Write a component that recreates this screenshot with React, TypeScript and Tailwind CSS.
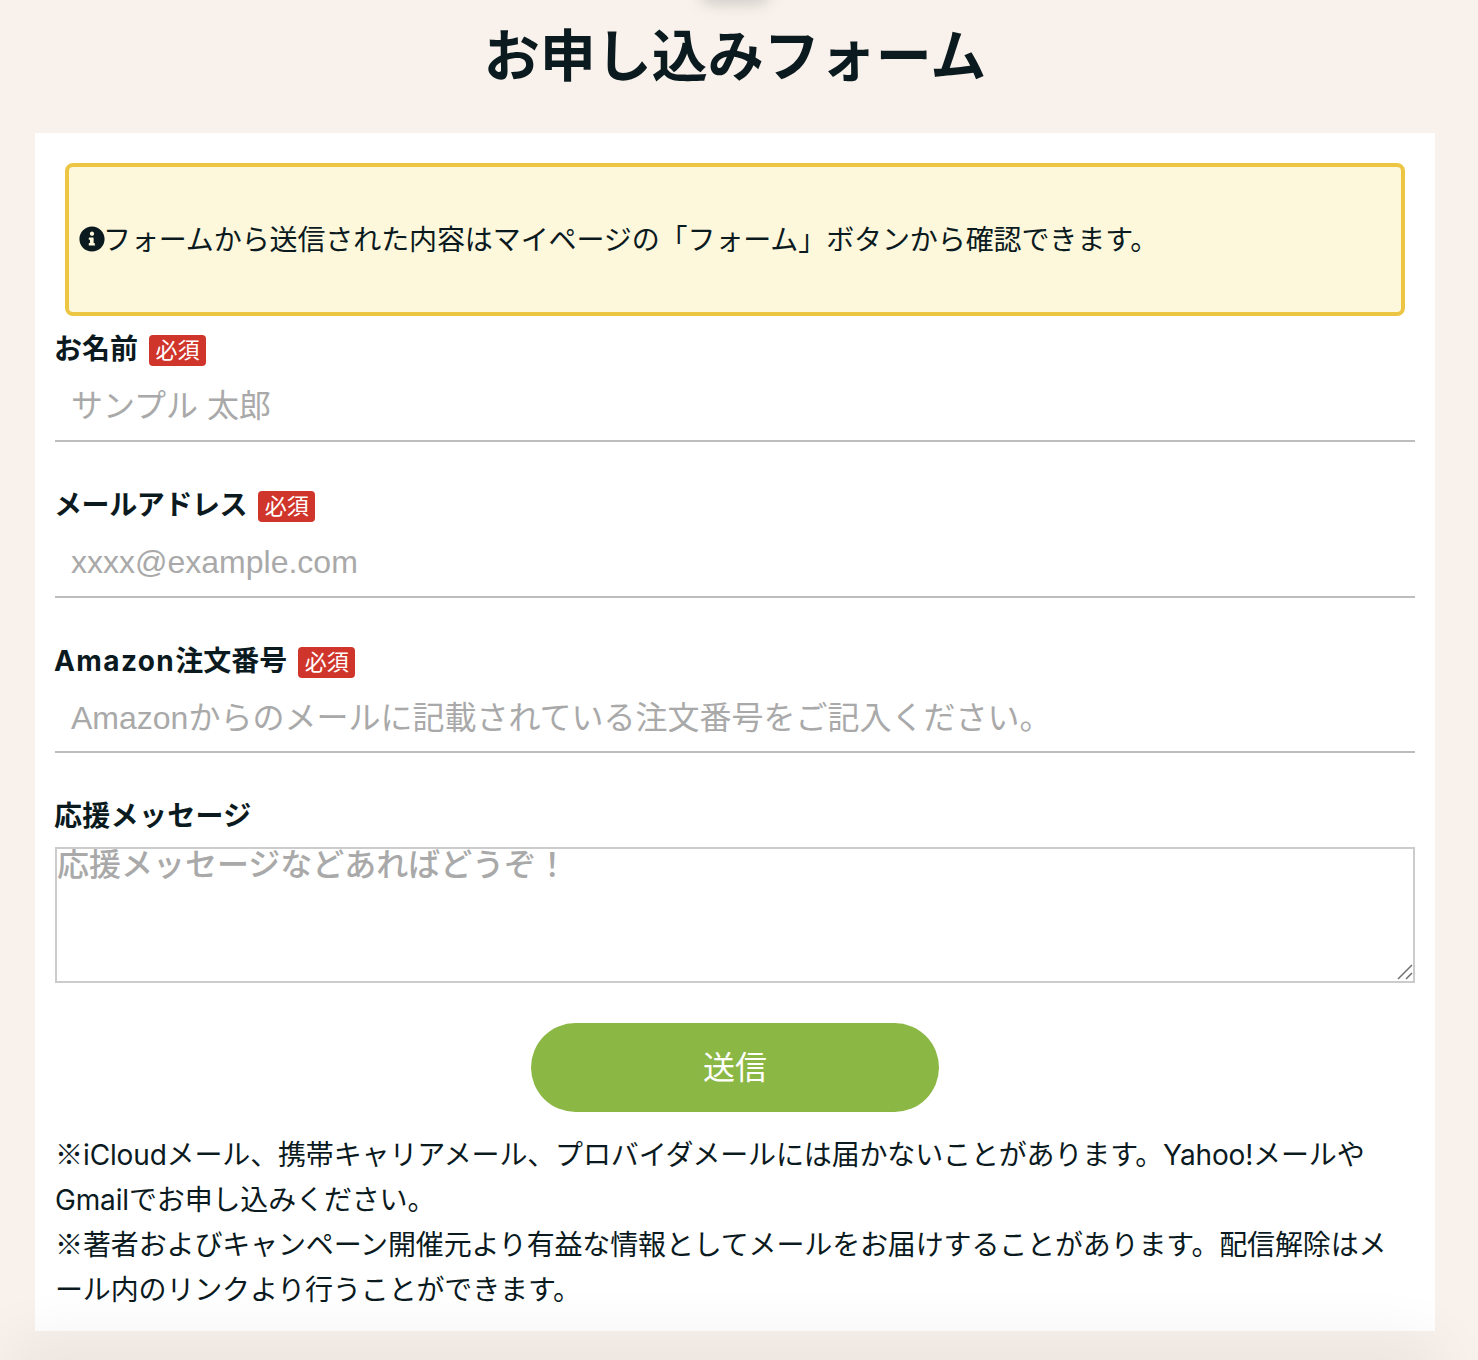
import React from "react";

const Badge = ({ ml = "ml-[11px]" }: { ml?: string }) => (
  <span className={`${ml} inline-flex h-[31px] w-[57px] items-center justify-center rounded-[4px] bg-[#d0352b] text-[22px] font-normal leading-none text-white`}>
    必須
  </span>
);

const Label = ({ children, badge = true, cls = "" }: { children: React.ReactNode; badge?: boolean; cls?: string }) => (
  <div className="flex h-[31px] items-center text-[28px] font-bold leading-none text-[#0b1a1e]">
    <span className={`-ml-[1px] pb-[2px] ${cls}`}>{children}</span>
    {badge && <Badge />}
  </div>
);

const Field = ({ label, placeholder, mt, cls, h = "h-[76px]" }: { label: React.ReactNode; placeholder: string; mt: string; cls?: string; h?: string }) => (
  <div className={mt}>
    <Label cls={cls}>{label}</Label>
    <input
      readOnly
      placeholder={placeholder}
      className={`block ${h} w-full border-b-2 border-[#bdbdbd] bg-white px-4 pt-[7px] text-[32px] outline-none placeholder:text-[#a9a9a9]`}
    />
  </div>
);

const Mark = () => <span className="font-['Noto_Sans_CJK_JP'] leading-none tracking-normal">※</span>;

export default function App() {
  return (
    <div
      className="relative h-[1360px] overflow-hidden bg-[#f9f2ec] text-[#0b1a1e]"
      style={{ fontFamily: '"Liberation Sans", "Noto Sans CJK JP", sans-serif' }}
    >
      <div className="absolute left-[735px] top-[-22px] h-[26px] w-[70px] -translate-x-1/2 rounded-full bg-[#8f8f8f] opacity-40 blur-[8px]" />
      <div className="w-[1470px]">
        <h1 className="flex h-[133px] items-start justify-center pt-[15px] text-[56px] font-bold leading-[84px]">
          お申し込みフォーム
        </h1>
        <main className="ml-[35px] h-[1198px] w-[1400px] bg-white px-5 pt-[30px]">
          <div className="mx-[10px] flex h-[153px] items-center rounded-[8px] border-4 border-[#ecc643] bg-[#fdf7db] pl-[10px] text-[28px] leading-none">
            <svg viewBox="0 0 512 512" className="-mt-[1px] h-[26px] w-[26px] shrink-0" fill="#0b1a1e">
              <path d="M256 8C119 8 8 119 8 256s111 248 248 248 248-111 248-248S393 8 256 8zm0 102c23 0 42 19 42 42s-19 42-42 42-42-19-42-42 19-42 42-42zm64 262c0 7-5 12-12 12H204c-7 0-12-5-12-12v-24c0-7 5-12 12-12h12v-64h-12c-7 0-12-5-12-12v-24c0-7 5-12 12-12h72c7 0 12 5 12 12v100h12c7 0 12 5 12 12v24z" />
            </svg>
            <span className="-ml-[2px] pt-[2px] tracking-[-0.1px]">フォームから送信された内容はマイページの「フォーム」ボタンから確認できます。</span>
          </div>
          <Field mt="mt-[19px]" label="お名前" placeholder="サンプル 太郎" />
          <Field mt="mt-[49px]" label="メールアドレス" cls="tracking-[-0.4px]" placeholder="xxxx@example.com" />
          <Field
            mt="mt-[49px]"
            h="h-[75px]"
            label={
              <>
                <span className="font-['Inter'] tracking-[1.4px]">Amazon</span>注文番号
              </>
            }
            placeholder="Amazonからのメールに記載されている注文番号をご記入ください。"
          />
          <div className="mt-[49px]">
            <Label badge={false} cls="tracking-[0.3px]">応援メッセージ</Label>
            <div className="relative mt-[14px]">
              <textarea
                readOnly
                placeholder="応援メッセージなどあればどうぞ！"
                className="block h-[136px] w-full resize-none border-2 border-[#cccccc] bg-white px-0 text-[32px] font-medium leading-[33px] outline-none placeholder:text-[#a9a9a9]"
              />
              <svg viewBox="0 0 16 16" className="absolute bottom-[3px] right-[2px] h-4 w-4" stroke="#6f6f6f" strokeWidth="1.5" fill="none">
                <path d="M1 15 15 1M9 15l6-6" />
              </svg>
            </div>
          </div>
          <button className="mx-auto mt-[40px] block h-[89px] w-[408px] rounded-full bg-[#8bb745] text-[32px] text-white">
            送信
          </button>
          <p className="mt-[21px] pr-[20px] font-['Inter','Noto_Sans_CJK_JP',sans-serif] text-[28px] leading-[45px] tracking-[-0.15px]">
            <Mark />iCloudメール、携帯キャリアメール、プロバイダメールには届かないことがあります。Yahoo!メールやGmailでお申し込みください。
            <br />
            <Mark />著者およびキャンペーン開催元より有益な情報としてメールをお届けすることがあります。配信解除はメール内のリンクより行うことができます。
          </p>
        </main>
      </div>
      <div className="pointer-events-none absolute bottom-[-55px] left-0 right-[30px] h-[80px] rounded-full bg-black opacity-[0.05] blur-[30px]" />
    </div>
  );
}
